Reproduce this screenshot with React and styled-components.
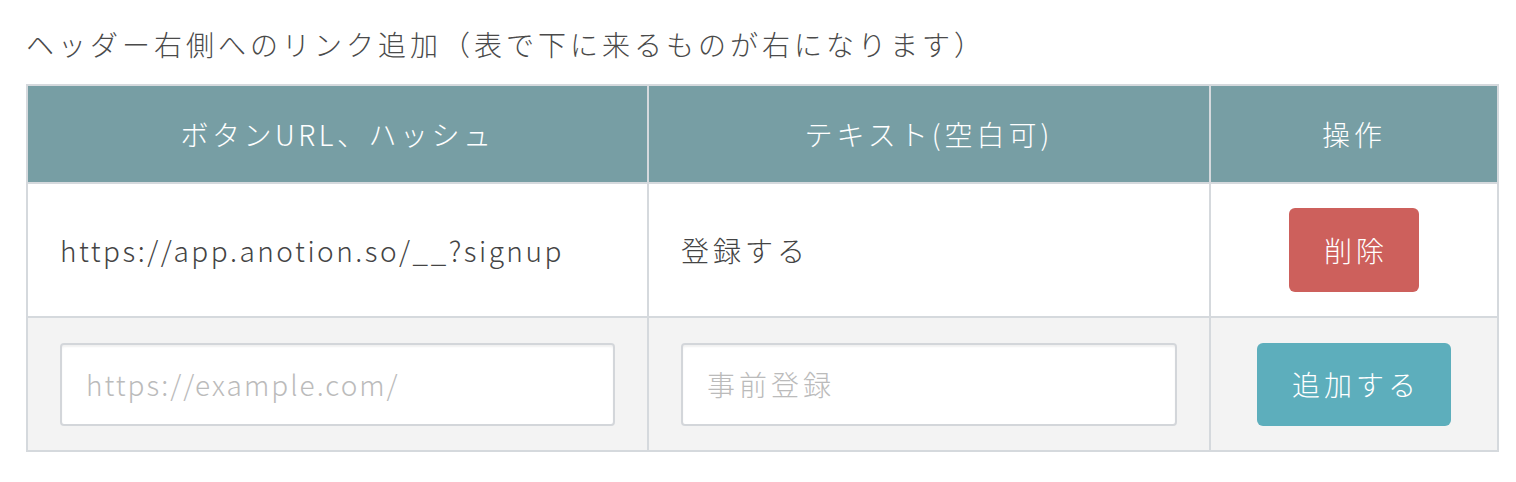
import React from "react";
import styled, { createGlobalStyle } from "styled-components";

const Global = createGlobalStyle`
  html, body { margin: 0; padding: 0; background: #fff; }
  body { font-family: "Noto Sans CJK JP", "Noto Sans", sans-serif; color: #444; }
`;

const Page = styled.div`
  padding: 26px 19px 30px 26px;
`;

const Title = styled.h2`
  margin: 0 0 22px 0;
  font-size: 28px;
  line-height: 36px;
  font-weight: 300;
  letter-spacing: 4px;
  color: #4a4a4a;
`;

const Table = styled.table`
  width: 1471px;
  border-collapse: collapse;
  table-layout: fixed;
  border: 2px solid #d5d9dd;
`;

const Th = styled.th`
  background: #779ea4;
  color: #fff;
  font-weight: 300;
  font-size: 28px;
  letter-spacing: ${(p) => p.$ls || 4}px;
  height: 96px;
  padding: 0;
  border: 2px solid #d5d9dd;
  text-align: center;
`;

const Tr = styled.tr`
  background: ${(p) => (p.$alt ? "#f3f3f3" : "#fff")};
`;

const Td = styled.td`
  border: 2px solid #d5d9dd;
  padding: 0 32px;
  height: 132px;
  font-size: 28px;
  font-weight: 300;
  letter-spacing: ${(p) => p.$ls ?? 4}px;
  color: #444;
  text-align: ${(p) => (p.$center ? "center" : "left")};
  vertical-align: middle;
`;

const Input = styled.input`
  box-sizing: border-box;
  width: 100%;
  height: 83px;
  border: 2px solid #d3d6da;
  border-radius: 4px;
  background: #fff;
  box-shadow: inset 0 2px 2px rgba(0, 0, 0, 0.06);
  padding: 0 24px;
  font-family: inherit;
  font-size: 28px;
  font-weight: 300;
  letter-spacing: ${(p) => p.$ls}px;
  color: #444;
  outline: none;
  &::placeholder { color: #bbb; }
`;

const Button = styled.button`
  border: none;
  border-radius: 6px;
  color: #fff;
  font-family: inherit;
  font-size: 28px;
  font-weight: 300;
  letter-spacing: 4px;
  height: ${(p) => p.$h}px;
  padding: 0 ${(p) => p.$px}px 0 ${(p) => p.$px + 4}px;
  background: ${(p) => p.$bg};
  cursor: pointer;
`;

export default function App() {
  return (
    <Page>
      <Global />
      <Title>ヘッダー右側へのリンク追加（表で下に来るものが右になります）</Title>
      <Table>
        <colgroup>
          <col style={{ width: 621 }} />
          <col style={{ width: 562 }} />
          <col style={{ width: 288 }} />
        </colgroup>
        <thead>
          <tr>
            <Th $ls={3.5}>ボタンURL、ハッシュ</Th>
            <Th>テキスト(空白可)</Th>
            <Th>操作</Th>
          </tr>
        </thead>
        <tbody>
          <Tr>
            <Td $ls={2.5}>https://app.anotion.so/__?signup</Td>
            <Td>登録する</Td>
            <Td $center>
              <Button $bg="#cd605c" $h={84} $px={31}>削除</Button>
            </Td>
          </Tr>
          <Tr $alt>
            <Td><Input $ls={2} placeholder="https://example.com/" /></Td>
            <Td><Input $ls={4} placeholder="事前登録" /></Td>
            <Td $center>
              <Button $bg="#5daebc" $h={83} $px={31}>追加する</Button>
            </Td>
          </Tr>
        </tbody>
      </Table>
    </Page>
  );
}
